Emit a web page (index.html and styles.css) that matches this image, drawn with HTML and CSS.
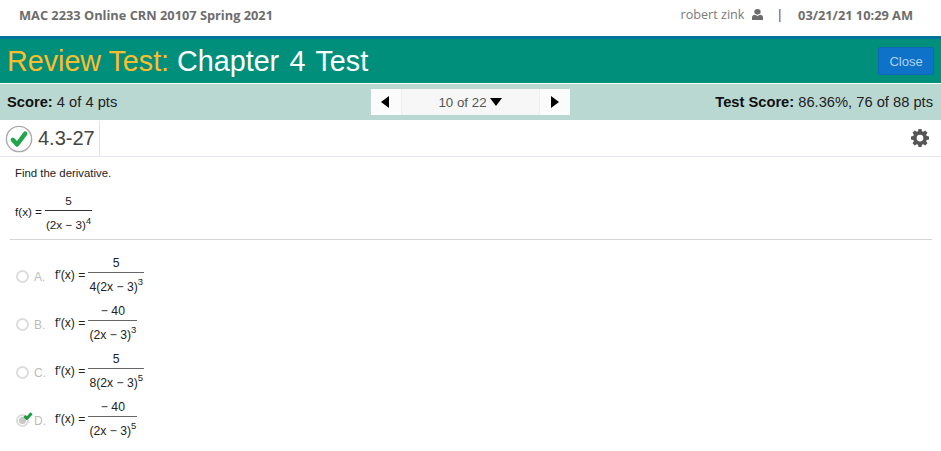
FILE: index.html
```html
<!DOCTYPE html>
<html lang="en">
<head>
<meta charset="utf-8">
<title>Review Test</title>
<link rel="stylesheet" href="styles.css">
</head>
<body>
<header class="topbar">
  <div class="course">MAC 2233 Online CRN 20107 Spring 2021</div>
  <div class="user">
    <span class="username">robert zink</span>
    <svg class="user-icon" viewBox="1 0 10 11.500" preserveAspectRatio="none"><circle cx="6" cy="3" r="2.900"/><path d="M1 11.500V8.600C1 7 2.200 6 3.600 6L6 7.200 8.400 6C9.800 6 11 7 11 8.600v2.900z"/></svg>
    <span class="sep">|</span>
    <span class="datetime">03/21/21 10:29 AM</span>
  </div>
</header>
<section class="titlebar">
  <h1 class="title"><span class="title-label">Review Test:</span> <span class="title-name">Chapter 4 Test</span></h1>
  <button class="close">Close</button>
</section>
<section class="scorebar">
  <div class="score"><b>Score:</b> 4 of 4 pts</div>
  <nav class="pager">
    <div class="pager-btn"><svg class="arrow" viewBox="0 0 9 12"><path d="M8 0v12L0 6z"/></svg></div>
    <div class="pager-mid">10 of 22 <svg class="caret" viewBox="0 0 12 8"><path d="M0 0h12L6 8z"/></svg></div>
    <div class="pager-btn"><svg class="arrow" viewBox="0 0 9 12"><path d="M1 0v12l8-6z"/></svg></div>
  </nav>
  <div class="testscore"><b>Test Score:</b> 86.36%, 76 of 88 pts</div>
</section>
<section class="qhead">
  <div class="qid">
    <svg class="qcheck" viewBox="0 0 28 28"><circle cx="14" cy="14" r="12.600" fill="#fff" stroke="#aaa" stroke-width="1.400"/><path d="M7.800 14.800l4.300 4.700L20.200 8.600" fill="none" stroke="#20a54a" stroke-width="4.400" stroke-linecap="round" stroke-linejoin="round"/></svg>
    <span>4.3-27</span>
  </div>
  <svg class="gear" viewBox="0 0 24 24"><path fill-rule="evenodd" d="M10 0h4l.6 3.100 1.700.700L19 2l3 3-1.800 2.700.7 1.700L24 10v4l-3.100.6-.7 1.700L22 19l-3 3-2.700-1.800-1.700.700L14 24h-4l-.6-3.100-1.700-.700L5 22l-3-3 1.800-2.700-.7-1.700L0 14v-4l3.100-.6.700-1.700L2 5l3-3 2.700 1.800 1.700-.7zM12 7.500a4.500 4.500 0 1 0 0 9 4.500 4.500 0 0 0 0-9z"/></svg>
</section>
<main class="content">
  <p class="prompt">Find the derivative.</p>
  <div class="math given">
    <span class="lhs">f(x) =</span>
    <span class="frac"><span class="num">5</span><span class="den">(2x − 3)<sup>4</sup></span></span>
  </div>
  <hr class="rule">
  <ul class="options">
    <li class="option">
      <span class="radio"></span><span class="letter">A.</span>
      <div class="math choice"><span class="lhs">f′(x) =</span><span class="frac"><span class="num">5</span><span class="den">4(2x − 3)<sup>3</sup></span></span></div>
    </li>
    <li class="option">
      <span class="radio"></span><span class="letter">B.</span>
      <div class="math choice"><span class="lhs">f′(x) =</span><span class="frac"><span class="num">− 40</span><span class="den">(2x − 3)<sup>3</sup></span></span></div>
    </li>
    <li class="option">
      <span class="radio"></span><span class="letter">C.</span>
      <div class="math choice"><span class="lhs">f′(x) =</span><span class="frac"><span class="num">5</span><span class="den">8(2x − 3)<sup>5</sup></span></span></div>
    </li>
    <li class="option">
      <span class="radio selected"><svg class="tick" viewBox="0 0 12 10"><path d="M1.500 5l3 3L10.500 1.500" fill="none" stroke="#169c3c" stroke-width="3.600"/></svg></span><span class="letter">D.</span>
      <div class="math choice"><span class="lhs">f′(x) =</span><span class="frac"><span class="num">− 40</span><span class="den">(2x − 3)<sup>5</sup></span></span></div>
    </li>
  </ul>
</main>
</body>
</html>
```
FILE: styles.css
```css
* { box-sizing: border-box; }
html, body { margin: 0; padding: 0; }
body { width: 941px; height: 451px; overflow: hidden; background: #fff; font-family: "Liberation Sans", Arial, sans-serif; color: #222; }

.topbar { height: 36px; display: flex; justify-content: space-between; align-items: center; padding: 0 28px 7px 19px; font-family: "Open Sans", sans-serif; font-size: 12.800px; color: #6d6d6d; }
.course, .datetime { font-weight: 700; }
.user { display: flex; align-items: center; }
.username { font-size: 12.600px; color: #7a7a7a; }
.user-icon { width: 11px; height: 11px; fill: #6d6d6d; margin-left: 8px; }
.sep { margin: 0 15px 0 13px; color: #8a4a30; font-size: 12px; font-weight: 600; }

.titlebar { height: 47px; border-top: 3px solid #00749b; background: #008f7b; display: flex; justify-content: space-between; align-items: center; padding: 0 7px; }
.title { margin: 0; font-size: 28.700px; font-weight: 400; color: #fff; line-height: 38px; white-space: nowrap; }
.title-label { color: #fdbd2c; }
.title-name { word-spacing: 2.500px; }
.close { width: 56px; height: 28px; border: 1px solid #0f69b9; border-radius: 2px; background: #0e72c8; color: #b0d2ef; font-family: inherit; font-size: 13px; padding: 0; }

.scorebar { margin-top: 1px; height: 36px; background: #b9d8d2; display: grid; grid-template-columns: 1fr auto 1fr; align-items: center; padding: 0 8px 0 7px; font-size: 14.700px; color: #222; }
.score b, .testscore b { color: #111; }
.testscore { text-align: right; }
.pager { display: flex; height: 26px; background: #f7f7f7; border-radius: 2px; }
.pager-btn { width: 31px; display: flex; align-items: center; justify-content: center; background: #fbfbfb; }
.pager-btn:first-child { border-right: 1px solid #eee; }
.pager-btn:last-child { border-left: 1px solid #eee; }
.arrow { width: 9px; height: 12px; fill: #000; }
.pager-mid { width: 137px; display: flex; align-items: center; justify-content: center; gap: 3px; font-size: 13.300px; color: #555; }
.caret { width: 12px; height: 8px; fill: #000; }

.qhead { margin-top: 1px; height: 36px; border-bottom: 1px solid #e6e6ee; display: flex; justify-content: space-between; align-items: center; padding-right: 12px; }
.qid { height: 100%; display: flex; align-items: center; gap: 5px; padding-left: 5px; border-right: 1px solid #dfe3e6; width: 100px; font-size: 20px; color: #444; }
.qcheck { width: 28px; height: 28px; flex: none; }
.gear { width: 18px; height: 18px; fill: #555; margin-bottom: 2px; }

.content { padding: 0 9px 0 10px; }
.prompt { margin: 10px 0 0 5px; font-size: 11.400px; line-height: 13px; color: #222; }
.math { display: flex; align-items: center; gap: 3px; font-size: 11.700px; color: #222; }
.math.given { margin: 14px 0 0 5px; }
.math.given .lhs { padding-bottom: 4px; }
.math.choice { font-size: 12.200px; }
.frac { display: inline-flex; flex-direction: column; align-items: stretch; text-align: center; }
.num { line-height: 14px; padding-bottom: 2px; border-bottom: 1px solid #333; }
.choice .num { border-bottom-color: #666; }
.den { line-height: 14px; padding: 7px 1px 0; white-space: nowrap; }
.den sup { font-size: 0.780em; line-height: 0; vertical-align: 0.600em; }
.rule { border: 0; border-top: 1px solid #d5d5d8; margin: 7px 0 0; }

.options { list-style: none; margin: 11px 0 0; padding: 0 0 0 6px; }
.option { height: 48px; display: flex; align-items: center; }
.radio { position: relative; width: 13px; height: 13px; border: 2px solid #dcdcdc; border-radius: 50%; flex: none; margin-top: 3px; }
.radio.selected::before { content: ""; position: absolute; left: 1px; top: 1px; width: 7px; height: 7px; border-radius: 50%; background: #c8c8c8; }
.tick { position: absolute; left: 5px; top: -4px; width: 10px; height: 8px; }
.letter { width: 21px; margin-left: 5px; margin-top: 3px; font-size: 12px; color: #bcbcbc; }
```
